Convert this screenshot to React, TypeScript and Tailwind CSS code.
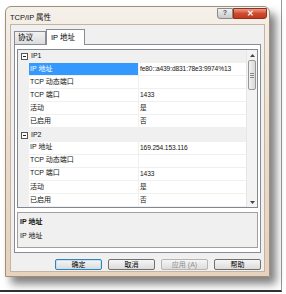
import React from "react";

const font = { fontFamily: '"Liberation Sans", "Noto Sans CJK SC", sans-serif' };

type Row = { name: string; value: string; selected?: boolean };

const groups: { title: string; rows: Row[] }[] = [
  {
    title: "IP1",
    rows: [
      { name: "IP 地址", value: "fe80::a439:d831:78e3:9974%13", selected: true },
      { name: "TCP 动态端口", value: "" },
      { name: "TCP 端口", value: "1433" },
      { name: "活动", value: "是" },
      { name: "已启用", value: "否" },
    ],
  },
  {
    title: "IP2",
    rows: [
      { name: "IP 地址", value: "169.254.153.116" },
      { name: "TCP 动态端口", value: "" },
      { name: "TCP 端口", value: "1433" },
      { name: "活动", value: "是" },
      { name: "已启用", value: "否" },
    ],
  },
];

function Minus() {
  return (
    <div className="w-[7px] h-[7px] border border-[#555] bg-white flex items-center justify-center">
      <div className="w-[3px] h-px bg-[#222]" />
    </div>
  );
}

function Btn({ label, primary, disabled }: { label: string; primary?: boolean; disabled?: boolean }) {
  return (
    <div
      className={`w-[47px] h-[11px] rounded-[2px] border flex items-center justify-center text-[7px] leading-none bg-gradient-to-b from-[#f6f6f6] to-[#dcdcdc] ${
        primary ? "border-[#3c7fb1] shadow-[inset_0_0_0_1px_#bfe3f7]" : disabled ? "border-[#b5b5b5] text-[#8d8d8d]" : "border-[#707070]"
      }`}
    >
      {label}
    </div>
  );
}

export default function App() {
  return (
    <div className="w-[286px] h-[294px] bg-white overflow-hidden" style={font}>
      <div className="pt-[6px] pl-[5px] pb-[3px] pr-[5px] border-b-2 border-[#333] w-[282px] h-[292px] border-r border-r-[#999]">
        <div className="w-[265px] h-[271px] rounded-t-[6px] bg-gradient-to-b from-[#f5f0ea] via-[#ecdccb] to-[#e6d2bd] border border-[#a08f7c] shadow-[6px_7px_9px_rgba(0,0,0,0.5)] flex flex-col">
          {/* title bar */}
          <div className="h-[17px] flex items-start pl-[4px] pr-[2px]">
            <span className="text-[7.5px] text-[#111] mt-[5px]">TCP/IP 属性</span>
            <div className="ml-auto flex">
              <div className="w-[16px] h-[11px] mt-[1px] rounded-bl-[3px] border border-[#8a8a8a] bg-gradient-to-b from-[#f0f0f0] to-[#c9c9c9] flex items-center justify-center text-[7px] text-[#555] font-bold">?</div>
              <div className="w-[34px] h-[11px] mt-[1px] rounded-br-[3px] border border-[#8f2f1f] bg-gradient-to-b from-[#e79b87] via-[#cf4b2f] to-[#c23a1d] flex items-center justify-center text-[8px] text-white font-bold leading-none">✕</div>
            </div>
          </div>
          {/* client */}
          <div className="mx-[4px] flex-1 mb-[4px] bg-[#f0f0f0] border border-[#c4b4a2] flex flex-col">
            {/* tabs */}
            <div className="flex items-end pl-[3px] h-[19px]">
              <div className="w-[32px] h-[13px] border border-[#898c95] border-b-0 bg-gradient-to-b from-[#f2f2f2] to-[#dcdcdc] text-[7.5px] flex items-center pl-[3px]">协议</div>
              <div className="w-[39px] h-[16px] border border-[#898c95] border-b-0 bg-white text-[7.5px] flex items-center pl-[4px] -mb-px relative z-10">IP 地址</div>
            </div>
            {/* panel */}
            <div className="mx-[3px] h-[209px] border border-[#898c95] bg-white px-[2px] pt-[4px]">
              {/* grid */}
              <div className="h-[159px] border border-[#828790] flex bg-white">
                <div className="flex-1 flex flex-col text-[7px] text-[#111]">
                  {groups.map((g) => (
                    <React.Fragment key={g.title}>
                      <div className="h-[13.2px] bg-[#f0f0f0] flex items-center pl-[3px] gap-[3px]">
                        <Minus />
                        <span>{g.title}</span>
                      </div>
                      {g.rows.map((r, i) => (
                        <div key={g.title + i} className="h-[13.2px] flex">
                          <div className="w-[11px] bg-[#f0f0f0]" />
                          <div className={`w-[109px] flex items-center pl-[1px] border-b border-[#f0f0f0] ${r.selected ? "bg-[#3399ff] text-white" : ""}`}>{r.name}</div>
                          <div className="w-px bg-[#f0f0f0]" />
                          <div className="flex-1 flex items-center pl-[1px] border-b border-[#f0f0f0] whitespace-nowrap text-[6.6px] tracking-[-0.1px]">{r.value}</div>
                        </div>
                      ))}
                    </React.Fragment>
                  ))}
                </div>
                {/* scrollbar */}
                <div className="w-[11px] bg-[#f3f3f3] border-l border-[#e6e6e6] flex flex-col">
                  <div className="h-[10px] flex items-center justify-center">
                    <svg width="5" height="3" viewBox="0 0 5 3"><path d="M0 3 L2.5 0 L5 3 Z" fill="#444" /></svg>
                  </div>
                  <div className="mx-[1px] h-[30px] rounded-[2px] border border-[#979797] bg-gradient-to-r from-[#f2f2f2] to-[#d9d9d9] flex flex-col items-center justify-center gap-px">
                    <div className="w-[4px] h-px bg-[#888]" />
                    <div className="w-[4px] h-px bg-[#888]" />
                    <div className="w-[4px] h-px bg-[#888]" />
                  </div>
                  <div className="flex-1" />
                  <div className="h-[10px] flex items-center justify-center">
                    <svg width="5" height="3" viewBox="0 0 5 3"><path d="M0 0 L2.5 3 L5 0 Z" fill="#444" /></svg>
                  </div>
                </div>
              </div>
              {/* description */}
              <div className="mt-[4px] h-[36px] border border-[#a0a0a0] bg-[#f0f0f0] pl-[2px] pt-[4px] text-[7px] text-[#111] flex flex-col gap-[3px]">
                <span className="font-bold">IP 地址</span>
                <span>IP 地址</span>
              </div>
            </div>
            {/* buttons */}
            <div className="flex justify-end gap-[6px] pr-[3px] mt-[6px]">
              <Btn label="确定" primary />
              <Btn label="取消" />
              <Btn label="应用 (A)" disabled />
              <Btn label="帮助" />
            </div>
          </div>
        </div>
      </div>
    </div>
  );
}
